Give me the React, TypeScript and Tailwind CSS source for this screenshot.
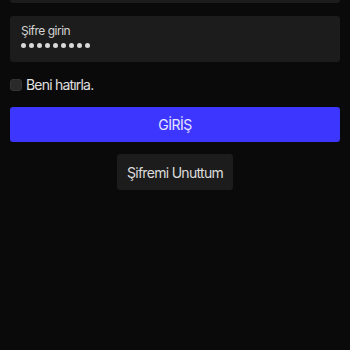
import React from "react";

export default function App() {
  const dots = Array.from({ length: 9 });
  return (
    <div className="w-[350px] h-[350px] bg-[#0a0a0a] overflow-hidden" style={{ fontFamily: "Inter, 'Noto Sans', sans-serif" }}>
      <div className="px-[10px] flex flex-col">
        <div className="h-[3px] bg-[#1c1c1c] rounded-b-[3px]" />
        <div className="mt-[13px] h-[46px] bg-[#1c1c1c] rounded-[3px] px-[11px] pt-[7px] flex flex-col">
          <span className="text-[12px] leading-[16px] text-[#d4d4d4] tracking-[-0.5px]">Şifre girin</span>
          <div className="mt-[4px] flex gap-[3px]">
            {dots.map((_, i) => (
              <span key={i} className="w-[5px] h-[5px] rounded-full bg-[#d8d8d8]" />
            ))}
          </div>
        </div>
        <label className="mt-[16px] flex items-center gap-[4px] h-[13px]">
          <span className="w-[12px] h-[12px] rounded-[3px] bg-[#2a2a2a] border border-[#333]" />
          <span className="text-[14px] text-[#e0e0e0] leading-none tracking-[-0.8px]">Beni hatırla.</span>
        </label>
        <button className="mt-[16px] h-[35px] bg-[#3c36ff] rounded-[3px] text-[14px] text-[#e6e6ff] tracking-[-0.5px]">
          GİRİŞ
        </button>
        <div className="mt-[12px] flex justify-center">
          <button className="w-[116px] h-[36px] bg-[#1c1c1c] rounded-[3px] text-[14px] text-[#dcdcdc] tracking-[-0.7px]">
            Şifremi Unuttum
          </button>
        </div>
      </div>
    </div>
  );
}
